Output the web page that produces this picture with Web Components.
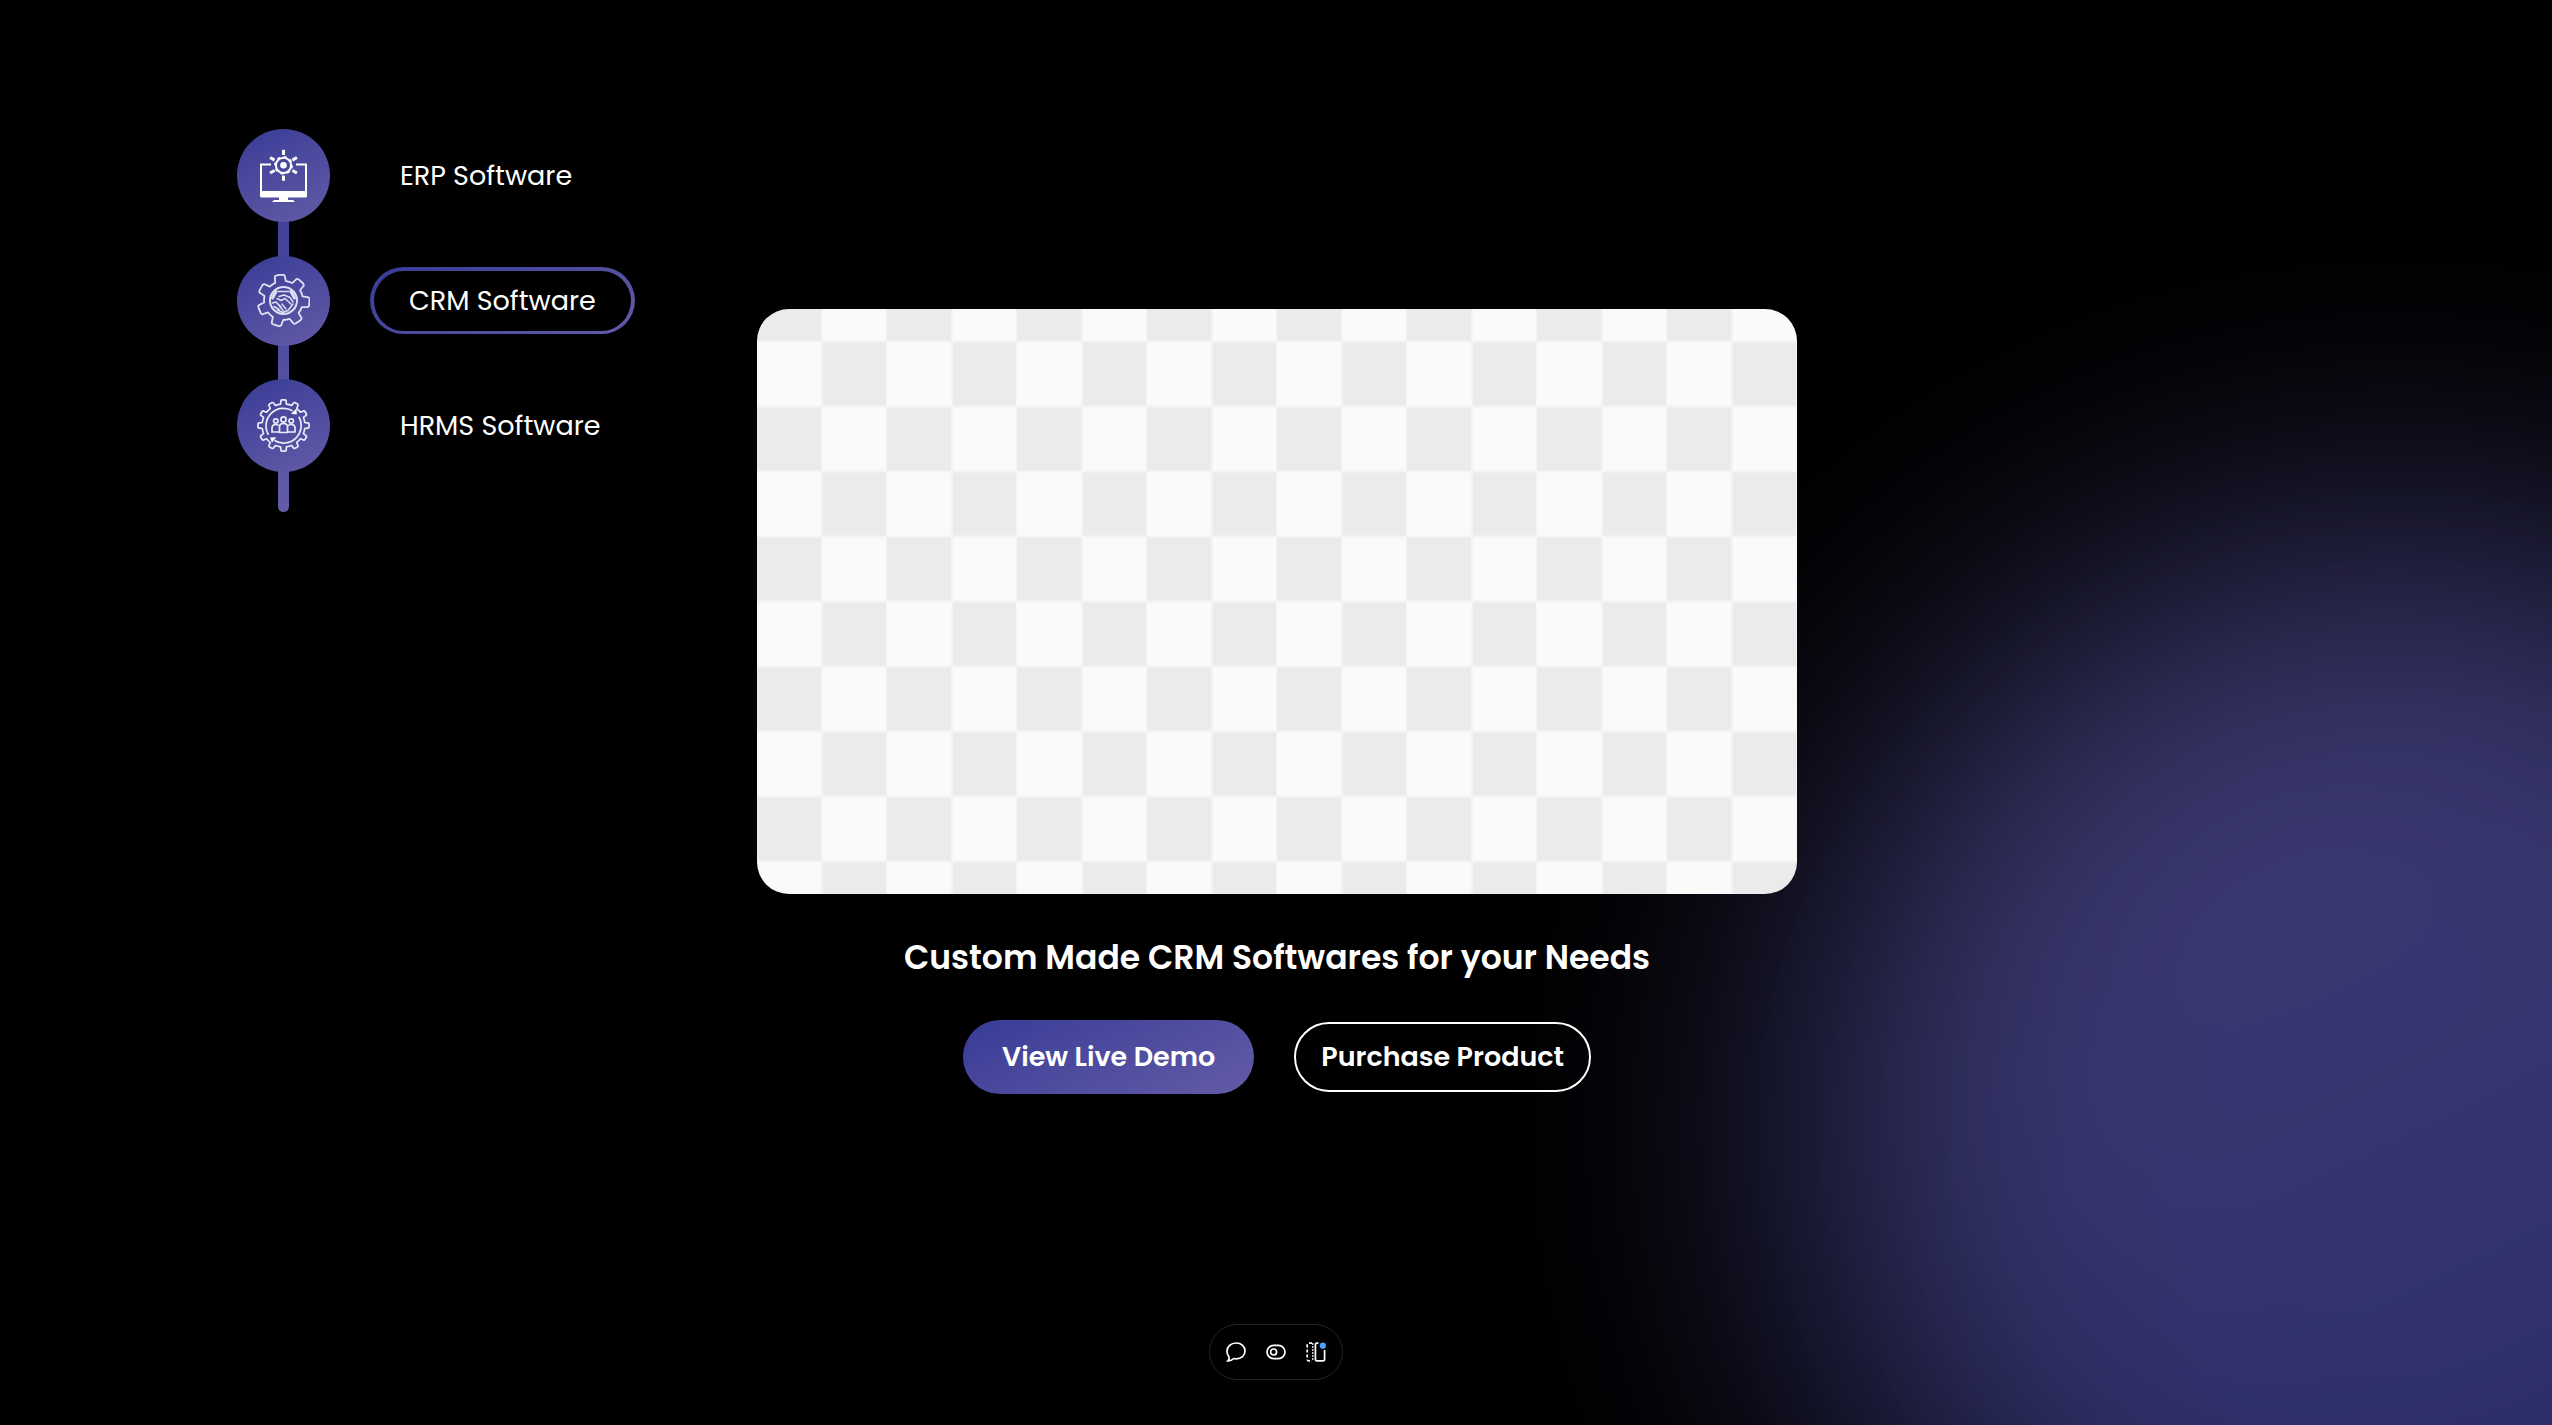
<!DOCTYPE html>
<html lang="en">
<head>
<meta charset="utf-8">
<meta name="viewport" content="width=device-width, initial-scale=1">
<title>CRM Software</title>
<style>
  html { background: #000; }
  body {
    margin: 0;
    color: #fff;
    font-family: Poppins, Inter, "Noto Sans", sans-serif;
    --brand: linear-gradient(154deg, #383c96, #635ba7);
  }
</style>
</head>
<body>
<product-page></product-page>

<script>
  const define = (name, html) => customElements.define(name, class extends HTMLElement {
    constructor() {
      super();
      this.attachShadow({ mode: 'open' }).innerHTML = html;
    }
  });

  /* Outline of a cog: each tooth is a trapezoid between the root and outer radius. */
  function cog(cx, cy, teeth, outer, root, phase, top, base) {
    const at = (r, deg) => {
      const a = deg * Math.PI / 180;
      return (cx + r * Math.cos(a)).toFixed(2) + ' ' + (cy + r * Math.sin(a)).toFixed(2);
    };
    let d = '';
    for (let i = 0; i < teeth; i++) {
      const c = phase + i * 360 / teeth;
      d += (i ? 'L' : 'M') + at(root, c - base) + 'L' + at(outer - 2, c - top) +
        'Q' + at(outer, c - top) + ' ' + at(outer, c - top / 2) +
        'L' + at(outer, c + top / 2) + 'Q' + at(outer, c + top) + ' ' + at(outer - 2, c + top) +
        'L' + at(root, c + base);
      d += `A${root} ${root} 0 0 1 ` + at(root, c + 360 / teeth - base);
    }
    return d + 'Z';
  }

  const spoke = deg => `<path d="M26.5 .8V6" transform="rotate(${deg} 26.5 16.3)"/>`;

  const ICONS = {
    erp: `<g fill="none" stroke="#fff" stroke-width="2">
        <path d="M14 15.5H4V43H49V15.5H39"/>
        <circle cx="26.5" cy="16.3" r="7.6" stroke-width="2"/>
        <circle cx="26.5" cy="16.3" r="8.6" stroke-width="1.6" stroke-dasharray="3 3.75"/>
        <g stroke-width="3">${[0, 60, 120, 180, 240, 300].map(spoke).join('')}</g>
      </g>
      <circle cx="26.5" cy="16.3" r="3.3" fill="#fff"/>
      <path fill="#fff" d="M3 42H50V47a1.5 1.5 0 0 1-1.5 1.5H31V51H36L38 53H15L17 51H22V48.5H4.5A1.5 1.5 0 0 1 3 47Z"/>`,
    crm: `<g fill="none" stroke="#e0dff3" stroke-width="1.5" stroke-linejoin="round" stroke-linecap="round">
        <path d="${cog(26.5, 26.5, 7, 26, 19.5, -99, 12, 16)}" stroke-width="1.8"/>
        <circle cx="26.5" cy="26.5" r="13.5" stroke-width="2"/>
        <path stroke-width="3" d="M15.500 24L19 17.500M37.500 24L34 17.500"/>
        <path d="M21 17.500H32M22 22.500L27 21L33 23.500L36 28M20 24.500L24 26.500L28 24.500L34 30M15.500 29L19 28L24 33M17 32.500L22 35.500M21 30L26 36.500M25 30L29 35M20.500 36L25.500 38.500L31 36.500L36 30"/>
      </g>`,
    hrms: `<g fill="none" stroke="#ebeaf8" stroke-width="1.7" stroke-linejoin="round">
        <path d="${cog(26.5, 26.5, 12, 25.6, 21.5, -90, 6.5, 8)}"/>
        <path d="M35.500 11.800A17.500 17.500 0 0 0 11.500 35.800M17.500 41.500A17.500 17.500 0 0 0 41.800 17.800"/>
        <circle cx="18.800" cy="22" r="2.200"/><circle cx="26.500" cy="20.500" r="2.600"/><circle cx="34.200" cy="22" r="2.200"/>
        <path d="M22.500 33H15V29Q15 25.500 18.800 25.500Q21 25.500 22.500 27M30.500 33H38V29Q38 25.500 34.200 25.500Q32 25.500 30.500 27M22.500 33.500V28Q22.500 24.500 26.500 24.500Q30.500 24.500 30.500 28V33.500Z"/>
      </g>
      <path fill="#fff" d="M34 14.800L39.500 9.500L39.800 15.500ZM13 38.500L19.300 38.200L15 43.500Z"/>`
  };

  customElements.define('product-icon', class extends HTMLElement {
    connectedCallback() {
      if (this.shadowRoot) return;
      this.attachShadow({ mode: 'open' }).innerHTML = `
        <style>:host { display: block; width: 53px; height: 53px; } svg { display: block; }</style>
        <svg viewBox="0 0 53 53" width="53" height="53" aria-hidden="true">${ICONS[this.getAttribute('name')]}</svg>`;
    }
  });

  define('product-step', `
    <style>
      :host { display: flex; align-items: center; height: 125px; gap: 40px; }
      .disc {
        flex: none; box-sizing: border-box; width: 93px; height: 93px; border-radius: 50%;
        background: var(--brand); display: flex; align-items: center; justify-content: center;
      }
      button {
        font: inherit; font-size: 27px; line-height: 40px; color: inherit; white-space: nowrap;
        background: none; border: 0; padding: 0 30px; cursor: pointer;
      }
      :host([active]) .disc { height: 90px; }
      :host([active]) button {
        padding: 10px 35px; border: solid transparent; border-width: 4px 4px 3px; border-radius: 34px;
        background: linear-gradient(#000, #000) padding-box, var(--brand) border-box;
      }
    </style>
    <div class="disc"><slot name="icon"></slot></div>
    <button type="button"><slot></slot></button>`);

  define('product-steps', `
    <style>
      :host { display: grid; grid-template-columns: 93px auto; justify-content: start; padding-bottom: 24px; }
      .rail {
        grid-area: 1 / 1; justify-self: center; width: 11px; margin: 40px 0 -24px;
        border-radius: 6px; background: linear-gradient(#383c96, #635ba7);
      }
      nav { grid-area: 1 / 1 / 2 / 3; }
    </style>
    <div class="rail"></div>
    <nav aria-label="Products"><slot></slot></nav>`);

  define('product-preview', `
    <style>
      :host { display: block; width: 100%; aspect-ratio: 16 / 9; border-radius: 32px; overflow: hidden; }
      svg { display: block; width: 100%; height: 100%; }
    </style>
    <svg viewBox="0 0 1040 585" preserveAspectRatio="none" aria-hidden="true">
      <defs>
        <pattern id="checker" y="32.5" width="130" height="130" patternUnits="userSpaceOnUse">
          <path fill="#fafafa" d="M0 0H130V130H0Z"/>
          <path fill="#ebebeb" d="M65 0H130V65H65ZM0 65H65V130H0Z"/>
          <path fill="none" stroke="#f4f4f4" stroke-width="2" d="M0 0H130M0 130H130M0 65H130M65 0V130M130 0V130"/>
        </pattern>
      </defs>
      <rect width="1040" height="585" fill="url(#checker)"/>
    </svg>`);

  define('action-button', `
    <style>
      :host { display: block; }
      button {
        display: block; font: inherit; font-size: 27px; font-weight: 600; line-height: 40px;
        white-space: nowrap; cursor: pointer; color: #fff; border-radius: 37px;
        border: 0; padding: 17px 39px; background: var(--brand);
      }
      :host([outline]) button { border: 2px solid #fff; padding: 13px 25px; background: none; }
    </style>
    <button type="button"><slot></slot></button>`);

  define('product-stage', `
    <style>
      :host { display: flex; flex-direction: column; align-items: center; }
      h1 { margin: 34px 0 33px; font-size: 33px; font-weight: 600; line-height: 59px; text-align: center; }
      .actions { display: flex; align-items: center; gap: 40px; }
    </style>
    <product-preview></product-preview>
    <h1><slot></slot></h1>
    <div class="actions"><slot name="action"></slot></div>`);

  define('page-toolbar', `
    <style>
      :host {
        position: fixed; bottom: 45px; left: 0; right: 0; display: flex; justify-content: center;
        pointer-events: none;
      }
      div {
        display: flex; gap: 8px; padding: 11px 10px; border: 1px solid #252525; border-radius: 28px;
        background: #000; pointer-events: auto;
      }
      button { display: flex; padding: 6px; border: 0; background: none; cursor: pointer; }
      svg { display: block; fill: none; stroke: #fff; stroke-width: 1.7; }
    </style>
    <div role="toolbar" aria-label="Page tools">
      <button type="button" aria-label="Comment">
        <svg width="20" height="20" viewBox="0 0 20 20"><path d="M1.8 18.8C3.2 17.6 3.3 15.8 2.6 14.2C1.5 12.7 1 11 1 9.2C1 4.5 4.8 1 10.2 1C15.5 1 19 4.4 19 8.9C19 13.5 15.4 16.8 10.2 16.8C9.4 16.8 8.6 16.7 7.8 16.5C6 18.2 4 19 1.8 18.8Z"/></svg>
      </button>
      <button type="button" aria-label="Toggle">
        <svg width="20" height="20" viewBox="0 0 20 20"><rect x="1" y="3.4" width="18" height="13.2" rx="6.6"/><circle cx="7.6" cy="10" r="3"/></svg>
      </button>
      <button type="button" aria-label="Layout">
        <svg width="20" height="20" viewBox="0 0 20 20"><path d="M6 1.2H3Q1.2 1.2 1.2 3V17Q1.2 18.8 3 18.8H6" stroke-dasharray="3 2"/><path d="M6.8 1V19" stroke-width="1.2" stroke-dasharray="2 1"/><path d="M12.500 1.2H11Q9.4 1.2 9.4 3V17Q9.4 18.8 11 18.8H17Q18.6 18.8 18.6 17V8"/><circle cx="16.8" cy="3.7" r="3.1" fill="#47a3ff" stroke="none"/></svg>
      </button>
    </div>`);

  define('product-page', `
    <style>
      :host { display: block; position: relative; overflow: hidden; min-height: 100vh; isolation: isolate; }
      .glow {
        position: absolute; z-index: -1; right: -450px; bottom: -310px; width: 1200px; height: 1200px;
        border-radius: 50%; background: linear-gradient(154deg, #625ba6, #353c98); opacity: .7; filter: blur(160px);
      }
      main {
        display: grid; align-items: start; padding-top: 113px;
        grid-template-columns: minmax(0, 757fr) minmax(0, 1040fr) minmax(0, 755fr);
      }
      product-steps { padding-left: 237px; }
      product-stage { margin-top: 196px; }
    </style>
    <div class="glow"></div>
    <main>
      <product-steps>
        <product-step><product-icon slot="icon" name="erp"></product-icon>ERP Software</product-step>
        <product-step active><product-icon slot="icon" name="crm"></product-icon>CRM Software</product-step>
        <product-step><product-icon slot="icon" name="hrms"></product-icon>HRMS Software</product-step>
      </product-steps>
      <product-stage>
        Custom Made CRM Softwares for your Needs
        <action-button slot="action">View Live Demo</action-button>
        <action-button slot="action" outline>Purchase Product</action-button>
      </product-stage>
    </main>
    <page-toolbar></page-toolbar>`);
</script>
</body>
</html>
